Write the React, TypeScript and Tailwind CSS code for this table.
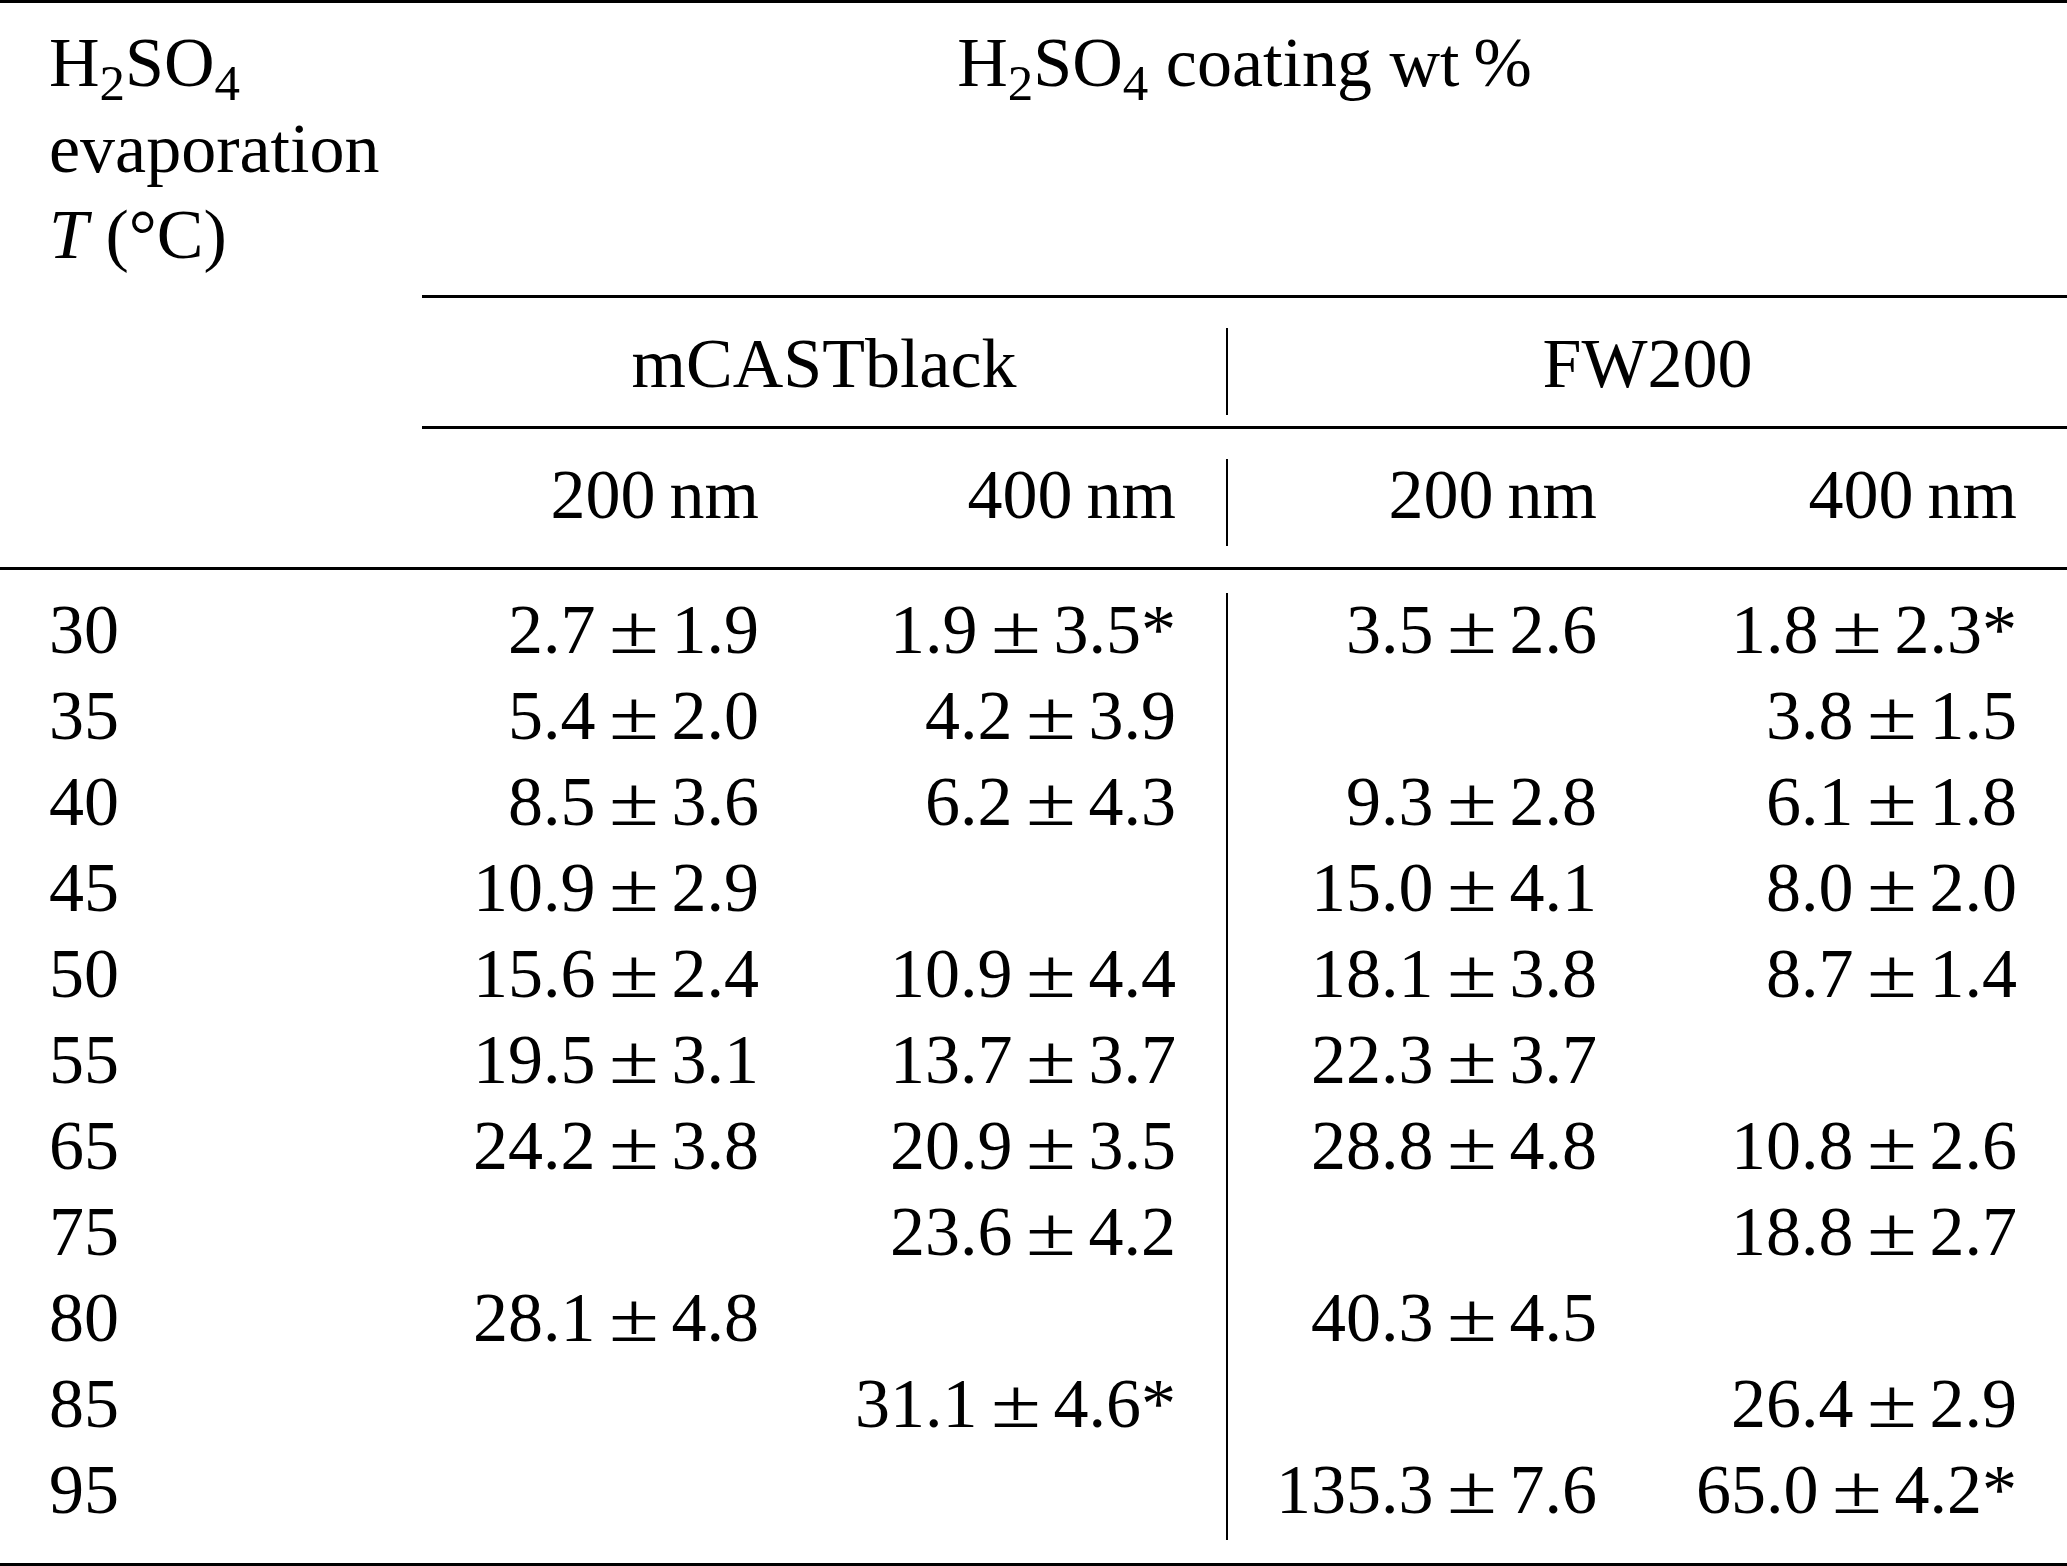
type Row = [string, string, string, string, string];

const rows: Row[] = [
  ["30", "2.7 ± 1.9", "1.9 ± 3.5*", "3.5 ± 2.6", "1.8 ± 2.3*"],
  ["35", "5.4 ± 2.0", "4.2 ± 3.9", "", "3.8 ± 1.5"],
  ["40", "8.5 ± 3.6", "6.2 ± 4.3", "9.3 ± 2.8", "6.1 ± 1.8"],
  ["45", "10.9 ± 2.9", "", "15.0 ± 4.1", "8.0 ± 2.0"],
  ["50", "15.6 ± 2.4", "10.9 ± 4.4", "18.1 ± 3.8", "8.7 ± 1.4"],
  ["55", "19.5 ± 3.1", "13.7 ± 3.7", "22.3 ± 3.7", ""],
  ["65", "24.2 ± 3.8", "20.9 ± 3.5", "28.8 ± 4.8", "10.8 ± 2.6"],
  ["75", "", "23.6 ± 4.2", "", "18.8 ± 2.7"],
  ["80", "28.1 ± 4.8", "", "40.3 ± 4.5", ""],
  ["85", "", "31.1 ± 4.6*", "", "26.4 ± 2.9"],
  ["95", "", "", "135.3 ± 7.6", "65.0 ± 4.2*"],
];

function Sub({ children }: { children: string }) {
  return <sub className="relative top-[14px] text-[51px]">{children}</sub>;
}

function Rule() {
  return <div className="h-[3px] bg-black" />;
}

function Divider({ className }: { className: string }) {
  return <div className={`w-[2px] shrink-0 bg-black ${className}`} />;
}

// value ± error, with a wider math-style plus-minus sign
function Value({ text }: { text: string }) {
  if (!text) return null;
  const [a, b] = text.split(" ± ");
  return (
    <>
      {a}
      <span className="mx-[16px] inline-block w-[44px] scale-x-[1.3] text-center">±</span>
      {b}
    </>
  );
}

export default function App() {
  return (
    <div className="flex w-[2067px] flex-col bg-white font-['Liberation_Serif','Times_New_Roman',serif] text-[70px] leading-[86px] text-black">
      <Rule />

      {/* header */}
      <div className="flex">
        <div className="w-[422px] shrink-0 pl-[49px] pt-[17px]">
          <div>
            H<Sub>2</Sub>SO<Sub>4</Sub>
          </div>
          <div>evaporation</div>
          <div>
            <span className="italic">T</span> (°C)
          </div>
        </div>

        <div className="flex flex-1 flex-col">
          <div className="h-[292px] pt-[17px] text-center">
            H<Sub>2</Sub>SO<Sub>4</Sub> coating wt&thinsp;%
          </div>
          <Rule />
          <div className="flex h-[128px]">
            <div className="w-[804px] shrink-0 pt-[23px] text-center">mCASTblack</div>
            <Divider className="mt-[30px] h-[87px]" />
            <div className="flex-1 pt-[23px] text-center">FW200</div>
          </div>
          <Rule />
          <div className="flex h-[138px]">
            <div className="w-[387px] shrink-0 pr-[50px] pt-[23px] text-right">200&thinsp;nm</div>
            <div className="w-[417px] shrink-0 pr-[50px] pt-[23px] text-right">400&thinsp;nm</div>
            <Divider className="mt-[30px] h-[87px]" />
            <div className="w-[419px] shrink-0 pr-[50px] pt-[23px] text-right">200&thinsp;nm</div>
            <div className="flex-1 pr-[50px] pt-[23px] text-right">400&thinsp;nm</div>
          </div>
        </div>
      </div>

      <Rule />

      {/* body */}
      <div className="flex h-[993px]">
        <div className="flex w-[1226px] shrink-0 flex-col pt-[17px]">
          {rows.map((r) => (
            <div key={r[0]} className="flex h-[86px]">
              <div className="w-[422px] shrink-0 pl-[49px]">{r[0]}</div>
              <div className="w-[387px] shrink-0 pr-[50px] text-right">
                <Value text={r[1]} />
              </div>
              <div className="w-[417px] shrink-0 pr-[50px] text-right">
                <Value text={r[2]} />
              </div>
            </div>
          ))}
        </div>
        <Divider className="my-[23px]" />
        <div className="flex flex-1 flex-col pt-[17px]">
          {rows.map((r) => (
            <div key={r[0]} className="flex h-[86px]">
              <div className="w-[419px] shrink-0 pr-[50px] text-right">
                <Value text={r[3]} />
              </div>
              <div className="flex-1 pr-[50px] text-right">
                <Value text={r[4]} />
              </div>
            </div>
          ))}
        </div>
      </div>

      <Rule />
    </div>
  );
}
